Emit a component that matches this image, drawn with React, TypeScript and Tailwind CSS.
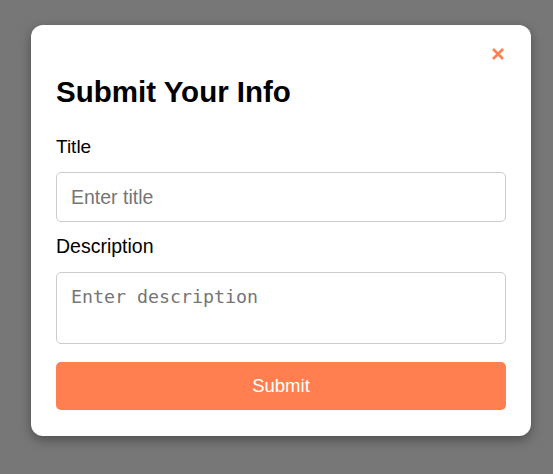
import { useState } from "react";

export default function App() {
  const [title, setTitle] = useState("");
  const [description, setDescription] = useState("");

  return (
    <div className="min-h-screen w-full bg-[#777777] pl-[31px] pt-[25px] font-['Liberation_Sans',Arial,sans-serif]">
      {/* Modal card */}
      <div className="relative w-[500px] rounded-[12px] bg-white px-[25px] pt-[50px] pb-[26px] shadow-[0_4px_12px_rgba(0,0,0,0.35)]">
        <button
          type="button"
          aria-label="Close"
          className="absolute right-[23px] top-[19px] flex h-[20px] w-[20px] items-center justify-center text-[#FF7F50]"
        >
          <svg width="14" height="14" viewBox="0 0 14 14" fill="none">
            <path d="M2 2L12 12M12 2L2 12" stroke="currentColor" strokeWidth="2.6" strokeLinecap="butt" />
          </svg>
        </button>

        <h2 className="text-[29.5px] font-bold leading-[33px] text-black">Submit Your Info</h2>

        <form className="mt-[28px] flex flex-col" onSubmit={(e) => e.preventDefault()}>
          <label className="text-[19px] leading-[21px] text-black">Title</label>
          <input
            value={title}
            onChange={(e) => setTitle(e.target.value)}
            placeholder="Enter title"
            className="mt-[15px] h-[50px] w-full rounded-[5px] border border-[#cccccc] px-[14px] text-[19.5px] text-black outline-none placeholder:text-[#757575]"
          />

          <label className="mt-[14px] text-[19.5px] leading-[21px] text-black">Description</label>
          <textarea
            value={description}
            onChange={(e) => setDescription(e.target.value)}
            placeholder="Enter description"
            className="mt-[15px] h-[72px] w-full resize-none rounded-[5px] border border-[#cccccc] px-[14px] pt-[13px] font-['DejaVu_Sans_Mono',monospace] text-[18.3px] leading-[21px] text-black outline-none placeholder:text-[#757575]"
          />

          <button
            type="submit"
            className="mt-[18px] h-[48px] w-full rounded-[5px] bg-[#FF7F50] text-[18.5px] text-white"
          >
            Submit
          </button>
        </form>
      </div>
    </div>
  );
}
